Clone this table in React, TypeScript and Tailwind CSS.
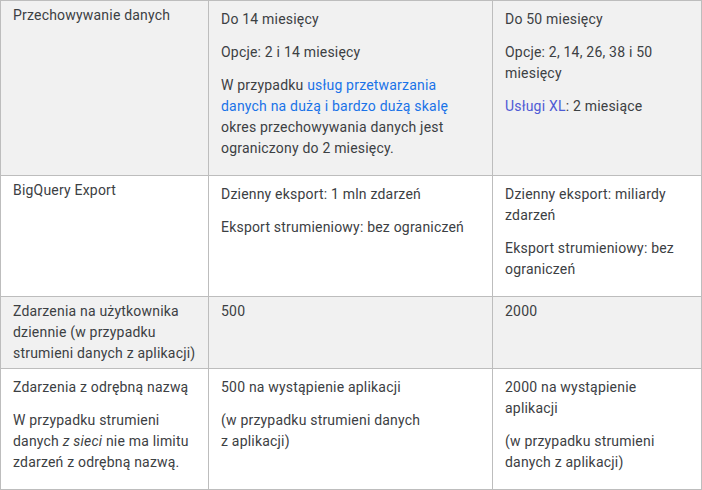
export default function App() {
  const cell = "border border-[#bdbdbd] align-top px-3 pt-1 pb-1 text-left font-normal"
  const p = "mt-1 mb-3"
  const link = "text-[#1a73e8]"

  return (
    <div
      className="w-[702px] h-[490px] bg-white text-[14px] leading-[21px] tracking-[0.2px] text-[#3c4043]"
      style={{ fontFamily: "Roboto, 'Liberation Sans', sans-serif" }}
    >
      <table className="w-[702px] table-fixed border-collapse">
        <colgroup>
          <col className="w-[208px]" />
          <col className="w-[284px]" />
          <col />
        </colgroup>
        <tbody>
          {/* Przechowywanie danych */}
          <tr className="bg-[#f1f1f1]">
            <td className={cell}>Przechowywanie danych</td>
            <td className={cell}>
              <p className={p}>Do 14 miesięcy</p>
              <p className={p}>Opcje: 2 i 14 miesięcy</p>
              <p className={p}>
                W przypadku <span className={link}>usług przetwarzania</span>
                <br />
                <span className={link}>danych na dużą i bardzo dużą skalę</span>
                <br />
                okres przechowywania danych jest
                <br />
                ograniczony do 2 miesięcy.
              </p>
            </td>
            <td className={cell}>
              <p className={p}>Do 50 miesięcy</p>
              <p className={p}>Opcje: 2, 14, 26, 38 i 50 miesięcy</p>
              <p className={p}>
                <span className="text-[#4f5bd5]">Usługi XL</span>: 2 miesiące
              </p>
            </td>
          </tr>

          {/* BigQuery */}
          <tr className="bg-white">
            <td className={cell}>BigQuery Export</td>
            <td className={cell}>
              <p className={p}>Dzienny eksport: 1 mln zdarzeń</p>
              <p className={p}>Eksport strumieniowy: bez ograniczeń</p>
            </td>
            <td className={cell}>
              <p className={p}>Dzienny eksport: miliardy zdarzeń</p>
              <p className={p}>Eksport strumieniowy: bez ograniczeń</p>
            </td>
          </tr>

          {/* Zdarzenia dziennie */}
          <tr className="bg-[#f1f1f1]">
            <td className={cell}>Zdarzenia na użytkownika dziennie (w przypadku strumieni danych z aplikacji)</td>
            <td className={cell}>500</td>
            <td className={cell}>2000</td>
          </tr>

          {/* Odrębna nazwa */}
          <tr className="bg-white">
            <td className={cell}>
              <p className={p}>Zdarzenia z odrębną nazwą</p>
              <p className={p}>
                W przypadku strumieni danych <em>z sieci</em> nie ma limitu zdarzeń z odrębną nazwą.
              </p>
            </td>
            <td className={cell}>
              <p className={p}>500 na wystąpienie aplikacji</p>
              <p className={p}>
                (w przypadku strumieni danych
                <br />z aplikacji)
              </p>
            </td>
            <td className={cell}>
              <p className={p}>
                2000 na wystąpienie
                <br />
                aplikacji
              </p>
              <p className={p}>(w przypadku strumieni danych z aplikacji)</p>
            </td>
          </tr>
        </tbody>
      </table>
    </div>
  )
}
